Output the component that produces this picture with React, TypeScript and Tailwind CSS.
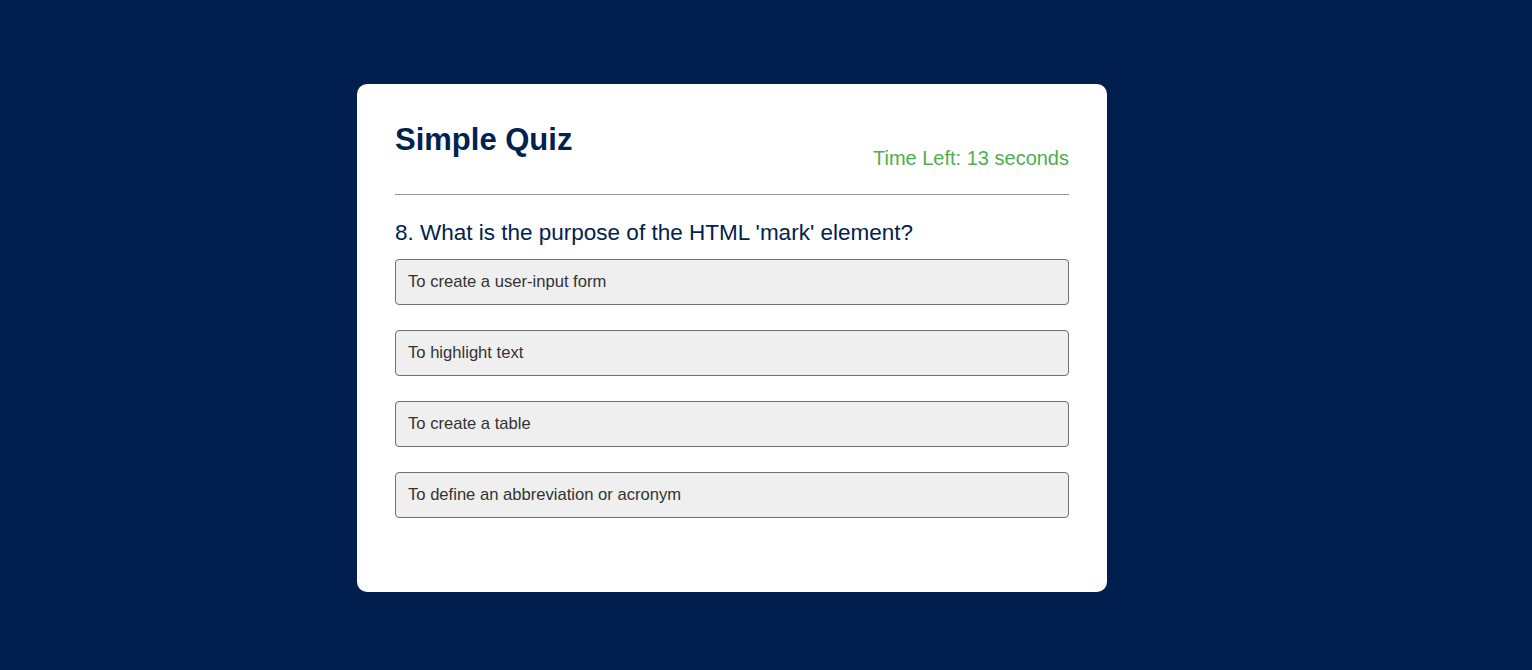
import React from 'react';

const OPTIONS = [
    'To create a user-input form',
    'To highlight text',
    'To create a table',
    'To define an abbreviation or acronym',
];

const App: React.FC = () => {
    return (
        <div className="min-h-screen w-full bg-[#001f4f] flex pl-[357px] pt-[84px]" style={{ fontFamily: '"Liberation Sans", Arial, sans-serif' }}>
            <div className="w-[750px] h-[508px] bg-white rounded-[10px] px-[38px] pt-[38px]">
                <div className="flex justify-between items-start">
                    <h1 className="text-[31px] leading-[36px] font-bold text-[#00224f]">Simple Quiz</h1>
                    <div className="mt-[25px] text-[20px] leading-[23px] text-[#4caf50]">Time Left: 13 seconds</div>
                </div>
                <hr className="mt-[24px] border-0 border-t border-[#999999]" />
                <h2 className="mt-[25px] text-[22.5px] leading-[25px] text-[#00224f]">8. What is the purpose of the HTML 'mark' element?</h2>
                <div className="mt-[14px] flex flex-col gap-[25px]">
                    {OPTIONS.map((opt) => (
                        <button
                            key={opt}
                            className="h-[46px] w-full text-left px-[12px] bg-[#efefef] border border-[#707070] rounded-[4px] text-[16.6px] text-[#333333]"
                        >
                            {opt}
                        </button>
                    ))}
                </div>
            </div>
        </div>
    );
};

export default App;
